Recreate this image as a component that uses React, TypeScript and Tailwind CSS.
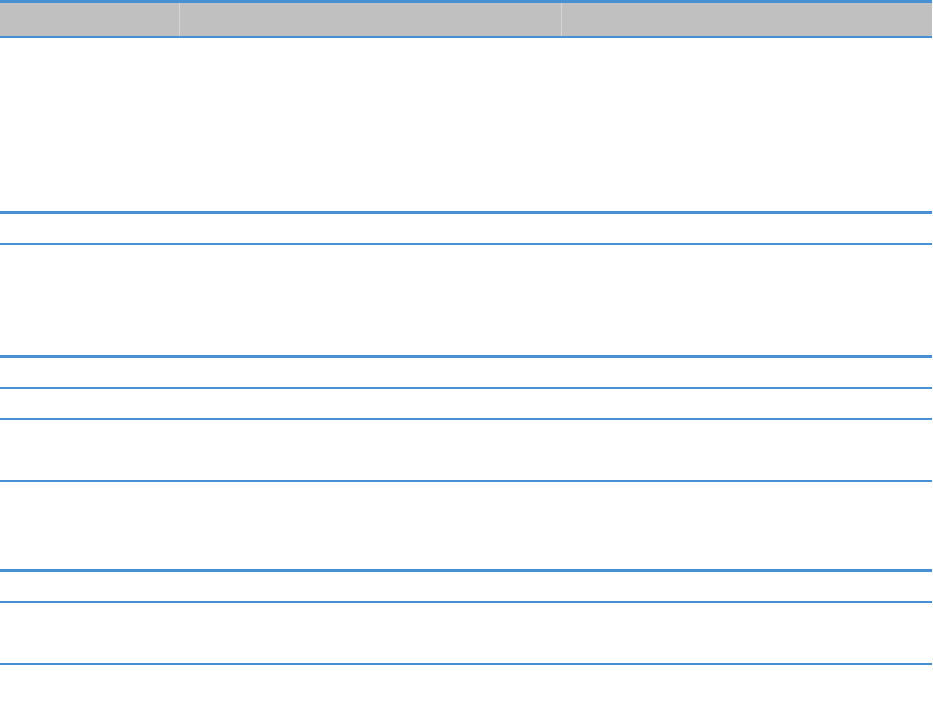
import React from "react";

const rows: { h: string; b: string }[] = [
  { h: "h-[173px]", b: "border-b-[3px]" },
  { h: "h-[29px]", b: "border-b-2" },
  { h: "h-[110px]", b: "border-b-[3px]" },
  { h: "h-[29px]", b: "border-b-2" },
  { h: "h-[29px]", b: "border-b-2" },
  { h: "h-[60px]", b: "border-b-2" },
  { h: "h-[87px]", b: "border-b-[3px]" },
  { h: "h-[29px]", b: "border-b-2" },
  { h: "h-[60px]", b: "border-b-2" },
];

export default function App() {
  return (
    <div className="w-[933px] h-[721px] bg-white" style={{ fontFamily: '"Liberation Sans", Arial, sans-serif' }}>
      <div className="w-[932px] flex flex-col">
        <div className="flex h-[38px] bg-[#c0c0c0] border-t-[3px] border-b-2 border-[#4690d3]">
          <div className="w-[180px] border-r border-[#d6d6d6]" />
          <div className="w-[382px] border-r border-[#d6d6d6]" />
          <div className="flex-1" />
        </div>
        {rows.map((r, i) => (
          <div key={i} className={`box-content ${r.h} ${r.b} border-[#4690d3]`} />
        ))}
      </div>
    </div>
  );
}
